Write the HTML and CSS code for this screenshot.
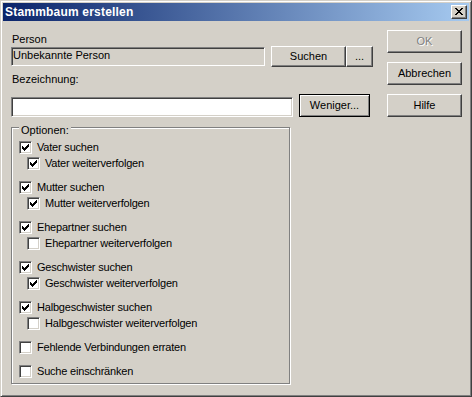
FILE: index.html
```html
<!DOCTYPE html>
<html lang="de">
<head>
    <meta charset="UTF-8">
    <title>Stammbaum erstellen</title>
    <link rel="stylesheet" href="styles.css">
</head>
<body>
    <div class="window">
        <!-- Title bar -->
        <div class="titlebar">
            <span class="title">Stammbaum erstellen</span>
            <button class="close-btn">
                <svg width="8" height="7" viewBox="0 0 8 7" shape-rendering="crispEdges">
                    <path d="M0 0h2v1h-2z M6 0h2v1h-2z M1 1h2v1h-2z M5 1h2v1h-2z M2 2h4v1h-4z M3 3h2v1h-2z M2 4h4v1h-4z M1 5h2v1h-2z M5 5h2v1h-2z M0 6h2v1h-2z M6 6h2v1h-2z" fill="#000"/>
                </svg>
            </button>
        </div>

        <div class="client">
            <div class="main">
                <!-- Person -->
                <div class="label">Person</div>
                <div class="row">
                    <div class="field field-person">Unbekannte Person</div>
                    <button class="btn btn-search">Suchen</button>
                    <button class="btn btn-more">...</button>
                </div>

                <!-- Bezeichnung -->
                <div class="label label-name">Bezeichnung:</div>
                <div class="row row-name">
                    <div class="field field-name"></div>
                    <button class="btn btn-default">Weniger...</button>
                </div>

                <!-- Optionen -->
                <div class="groupbox">
                    <span class="group-caption">Optionen:</span>
                    <div class="options">
                        <div class="pair">
                            <div class="check"><span class="box checked"></span>Vater suchen</div>
                            <div class="check sub"><span class="box checked"></span>Vater weiterverfolgen</div>
                        </div>
                        <div class="pair">
                            <div class="check"><span class="box checked"></span>Mutter suchen</div>
                            <div class="check sub"><span class="box checked"></span>Mutter weiterverfolgen</div>
                        </div>
                        <div class="pair">
                            <div class="check"><span class="box checked"></span>Ehepartner suchen</div>
                            <div class="check sub"><span class="box"></span>Ehepartner weiterverfolgen</div>
                        </div>
                        <div class="pair">
                            <div class="check"><span class="box checked"></span>Geschwister suchen</div>
                            <div class="check sub"><span class="box checked"></span>Geschwister weiterverfolgen</div>
                        </div>
                        <div class="pair">
                            <div class="check"><span class="box checked"></span>Halbgeschwister suchen</div>
                            <div class="check sub"><span class="box"></span>Halbgeschwister weiterverfolgen</div>
                        </div>
                        <div class="check"><span class="box"></span>Fehlende Verbindungen erraten</div>
                        <div class="check"><span class="box"></span>Suche einschränken</div>
                    </div>
                </div>
            </div>

            <!-- Dialog buttons -->
            <div class="side">
                <button class="btn btn-dialog" disabled>OK</button>
                <button class="btn btn-dialog">Abbrechen</button>
                <button class="btn btn-dialog">Hilfe</button>
            </div>
        </div>
    </div>

    <script>
        // draw the classic check mark into every checked box
        const checkSvg = '<svg width="9" height="9" viewBox="0 0 9 9" shape-rendering="crispEdges">' +
            '<path d="M7 1h1v1h-1z M6 2h2v1h-2z M1 3h1v1h-1z M5 3h3v1h-3z M1 4h2v1h-2z M4 4h3v1h-3z M1 5h5v1h-5z M2 6h3v1h-3z M3 7h1v1h-1z" fill="#000"/></svg>';
        document.querySelectorAll(".box.checked").forEach(box => {
            box.innerHTML = checkSvg;
        });
    </script>
</body>
</html>
```

FILE: styles.css
```css
html, body {
    margin: 0;
    padding: 0;
    background: #d4d0c8;
}
body {
    font-family: "Liberation Sans", Arial, sans-serif;
    font-size: 11px;
    line-height: 13px;
    color: #000;
}
.window {
    width: 472px;
    height: 397px;
    box-sizing: border-box;
    background: #d4d0c8;
    border: 1px solid;
    border-color: #d4d0c8 #404040 #404040 #d4d0c8;
    box-shadow: inset 1px 1px 0 #fff, inset -1px -1px 0 #808080;
    padding: 2px;
}

/* Title bar */
.titlebar {
    height: 18px;
    display: flex;
    align-items: center;
    padding-left: 2px;
    padding-right: 2px;
    background: linear-gradient(to right, #0a246a, #a6caf0);
}
.title {
    flex: 1;
    color: #fff;
    font-weight: bold;
    font-size: 12px;
    letter-spacing: 0.2px;
}
.close-btn {
    width: 16px;
    height: 14px;
    box-sizing: border-box;
    padding: 2px 0 0 0;
    margin: 0;
    display: flex;
    justify-content: center;
    align-items: flex-start;
    background: #d4d0c8;
    border: 1px solid;
    border-color: #fff #404040 #404040 #fff;
    box-shadow: inset -1px -1px 0 #808080;
}

/* Client area */
.client {
    display: flex;
    padding: 9px 7px 0 8px;
}
.main {
    width: 362px;
}
.side {
    margin-left: auto;
    width: 75px;
    display: flex;
    flex-direction: column;
    gap: 9px;
}
.label {
    margin-top: 3px;
    padding-left: 1px;
}
.label-name {
    margin-top: 6px;
}
.row {
    display: flex;
    align-items: center;
}
.row-name {
    margin-top: 8px;
    align-items: flex-end;
}

/* Edit fields */
.field {
    box-sizing: border-box;
    height: 19px;
    line-height: 15px;
    padding-left: 1px;
    border: 1px solid;
    border-color: #808080 #fff #fff #808080;
    box-shadow: inset 1px 1px 0 #404040, inset -1px -1px 0 #d4d0c8;
    white-space: nowrap;
}
.field-person {
    width: 254px;
    margin-right: 6px;
    background: #d4d0c8;
}
.field-name {
    width: 282px;
    height: 20px;
    margin-right: 6px;
    background: #fff;
}

/* Buttons */
.btn {
    box-sizing: border-box;
    margin: 0;
    padding: 0;
    font-family: inherit;
    font-size: 11px;
    line-height: 13px;
    color: #000;
    background: #d4d0c8;
    border: 1px solid;
    border-color: #fff #404040 #404040 #fff;
    box-shadow: inset -1px -1px 0 #808080;
}
.btn-search {
    width: 75px;
    height: 21px;
}
.btn-more {
    width: 27px;
    height: 21px;
}
.btn-default {
    width: 71px;
    height: 23px;
    border-color: #000;
    box-shadow: inset 1px 1px 0 #fff, inset -1px -1px 0 #808080;
}
.btn-dialog {
    width: 75px;
    height: 23px;
}
.btn:disabled {
    color: #808080;
    text-shadow: 1px 1px 0 #fff;
}

/* Group box */
.groupbox {
    position: relative;
    margin-top: 10px;
    width: 279px;
    height: 257px;
    box-sizing: border-box;
    border: 1px solid #808080;
    box-shadow: inset 1px 1px 0 #fff, 1px 1px 0 #fff;
    padding: 13px 0 0 7px;
}
.group-caption {
    position: absolute;
    left: 7px;
    top: -4px;
    padding: 0 2px;
    background: #d4d0c8;
}
.options {
    display: flex;
    flex-direction: column;
    gap: 11px;
}
.pair {
    display: flex;
    flex-direction: column;
    gap: 3px;
}
.check {
    display: flex;
    align-items: center;
    height: 13px;
    white-space: nowrap;
    letter-spacing: -0.2px;
}
.check.sub {
    margin-left: 8px;
}
.box {
    width: 13px;
    height: 13px;
    box-sizing: border-box;
    margin-right: 5px;
    background: #fff;
    border: 1px solid;
    border-color: #808080 #fff #fff #808080;
    box-shadow: inset 1px 1px 0 #404040, inset -1px -1px 0 #d4d0c8;
    flex-shrink: 0;
}
.box svg {
    display: block;
    margin: 1px 0 0 1px;
}
```
